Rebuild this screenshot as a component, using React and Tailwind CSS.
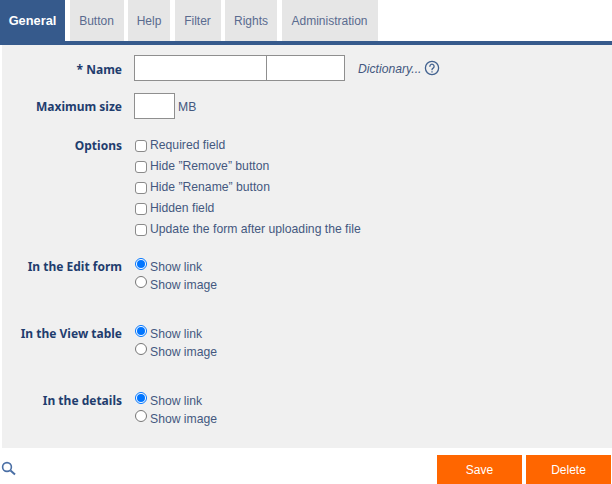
import React from "react";

const labelCls = "w-[123px] shrink-0 pr-[1px] text-right font-bold text-[12px] text-[#1f3d6e] [font-family:'Noto_Sans',sans-serif]";
const textCls = "text-[12.2px] text-[#44587f] leading-[21px]";

function Tab({ children, w, active }) {
  return (
    <div
      className={
        active
          ? "h-[41px] flex items-center justify-center bg-[#365a8c] text-white font-bold text-[12.8px]"
          : "h-[41px] flex items-center justify-center bg-[#e6e6e6] text-[#5a6b8f] text-[12px]"
      }
      style={{ width: w }}
    >
      {children}
    </div>
  );
}

function Check({ children }) {
  return (
    <div className="flex items-center h-[21px]">
      <span className="w-[12px] h-[12px] rounded-[3px] border border-[#8a8a8a] bg-white mr-[3px] ml-[1px] shrink-0" />
      <span className={textCls}>{children}</span>
    </div>
  );
}

function Radio({ children, on }) {
  return (
    <div className="flex items-center h-[17.5px]">
      <span
        className={
          on
            ? "w-[12px] h-[12px] mt-[-3px] rounded-full border border-[#0075ff] bg-white mr-[3px] ml-[1px] shrink-0 flex items-center justify-center"
            : "w-[12px] h-[12px] mt-[-3px] rounded-full border border-[#767676] bg-white mr-[3px] ml-[1px] shrink-0"
        }
      >
        {on && <span className="w-[8px] h-[8px] rounded-full bg-[#0075ff]" />}
      </span>
      <span className={textCls + " mt-[4px]"}>{children}</span>
    </div>
  );
}

function RadioRow({ label, mb }) {
  return (
    <div className={"flex gap-[11px] " + mb}>
      <div className={labelCls + " leading-[20px]"}>{label}</div>
      <div className="flex flex-col">
        <Radio on>Show link</Radio>
        <Radio>Show image</Radio>
      </div>
    </div>
  );
}

export default function App() {
  return (
    <div className="w-[612px] h-[484px] bg-white flex flex-col overflow-hidden [font-family:'Liberation_Sans',sans-serif]">
      <div className="flex gap-[4.5px] h-[41px] shrink-0">
        <Tab w={65} active>General</Tab>
        <Tab w={54}>Button</Tab>
        <Tab w={42}>Help</Tab>
        <Tab w={46}>Filter</Tab>
        <Tab w={52}>Rights</Tab>
        <Tab w={96}>Administration</Tab>
      </div>
      <div className="h-[4px] bg-[#365a8c] shrink-0" />
      <div className="h-[403px] bg-[#f0f0f0] pt-[10px] shrink-0 ml-[2px]">
        <div className="-ml-[2px] flex items-center gap-[11px] h-[26px] mb-[12px]">
          <div className={labelCls + " pt-[4px]"}>* Name</div>
          <div className="flex items-center">
            <div className="w-[133px] h-[26px] border border-[#8f8f8f] bg-white" />
            <div className="w-[78px] h-[26px] border border-l-0 border-[#8f8f8f] bg-white" />
            <span className="ml-[13px] pt-[2px] text-[12.2px] italic text-[#44587f]">Dictionary...</span>
            <svg className="ml-[3px]" width="16" height="16" viewBox="0 0 16 16" fill="none" stroke="#41618f" strokeWidth="1.3">
              <circle cx="8" cy="8" r="6.6" />
              <path d="M5.9 6.3a2.1 2.1 0 1 1 3.2 1.8c-.7.4-1.1.8-1.1 1.6" strokeLinecap="round" />
              <path d="M8 11.2v1.2" />
            </svg>
          </div>
        </div>
        <div className="-ml-[2px] flex items-center gap-[11px] h-[26px] mb-[15px]">
          <div className={labelCls + " pt-[2px]"}>Maximum size</div>
          <div className="w-[41px] h-[26px] border border-[#8f8f8f] bg-white" />
          <span className="ml-[-8px] pt-[2px] text-[12.2px] text-[#44587f]">MB</span>
        </div>
        <div className="-ml-[2px] flex gap-[11px] mb-[16px] pt-[1px]">
          <div className={labelCls + " leading-[21px]"}>Options</div>
          <div className="flex flex-col">
            <Check>Required field</Check>
            <Check>Hide ”Remove” button</Check>
            <Check>Hide ”Rename” button</Check>
            <Check>Hidden field</Check>
            <Check>Update the form after uploading the file</Check>
          </div>
        </div>
        <div className="-ml-[2px] pt-[1px]">
          <RadioRow label="In the Edit form" mb="mb-[32px]" />
          <RadioRow label="In the View table" mb="mb-[32px]" />
          <RadioRow label="In the details" mb="" />
        </div>
      </div>
      <div className="flex items-center flex-1">
        <svg className="ml-[1px] mt-[4px]" width="15" height="15" viewBox="0 0 15 15" fill="none" stroke="#4a6fa5">
          <circle cx="6" cy="6" r="4.4" strokeWidth="1.6" />
          <path d="M9.5 9.5l4.5 4" strokeWidth="2" />
        </svg>
        <div className="ml-auto mr-[1px] flex gap-[4px] h-[29px] self-end">
          <button className="w-[85px] bg-[#ff6600] text-white text-[12px]">Save</button>
          <button className="w-[85px] bg-[#ff6600] text-white text-[12px]">Delete</button>
        </div>
      </div>
    </div>
  );
}
